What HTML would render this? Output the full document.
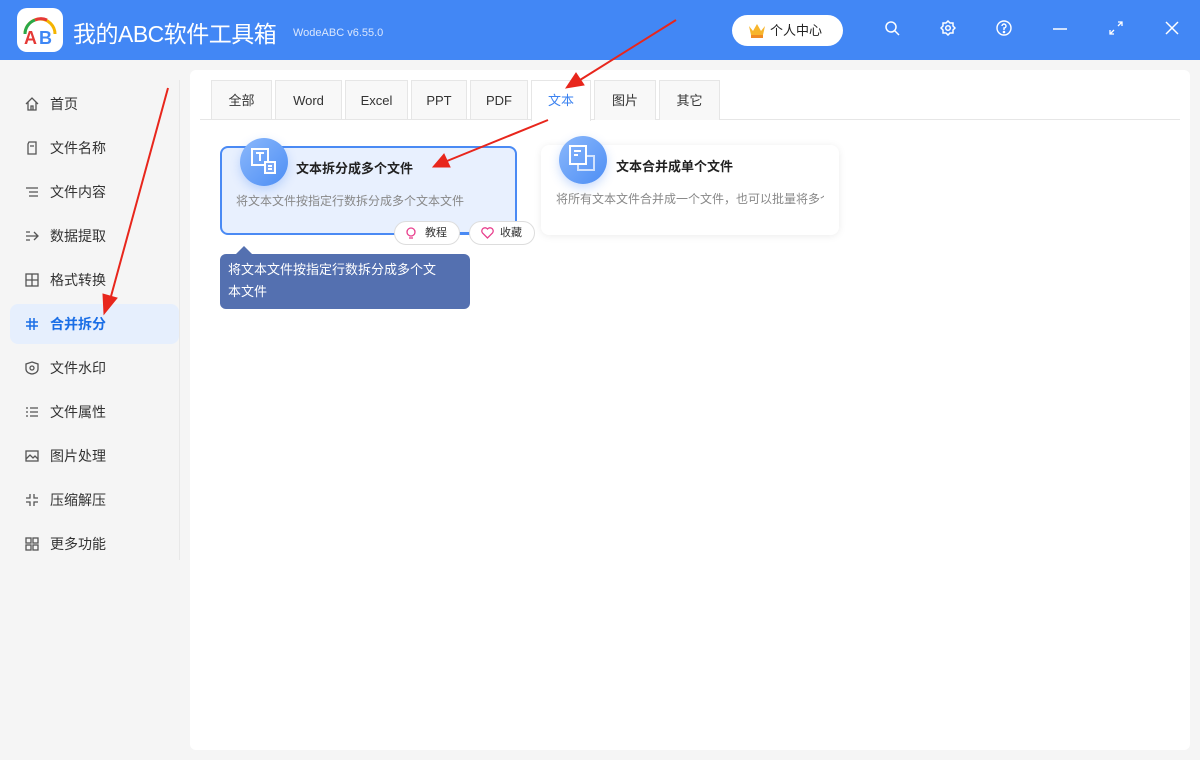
<!DOCTYPE html>
<html><head><meta charset="utf-8"><style>
*{margin:0;padding:0;box-sizing:border-box}
body{width:1200px;height:760px;background:#f5f5f5;font-family:"Liberation Sans","Noto Sans CJK SC",sans-serif;position:relative;overflow:hidden;color:#333}
.hdr{position:absolute;left:0;top:0;width:1200px;height:60px;background:#4287f5}
.logo{position:absolute;left:17px;top:8px;width:46px;height:44px;background:#fff;border-radius:10px}
.title{position:absolute;left:73px;top:15px;color:#fff;font-size:23px;letter-spacing:-0.5px;white-space:nowrap}
.ver{position:absolute;left:293px;top:27px;color:#dbe7fd;font-size:11px}
.user{position:absolute;left:732px;top:15px;width:111px;height:31px;background:#fff;border-radius:16px;font-size:13px;line-height:31px;padding-left:38px;color:#222}
.ic{position:absolute;top:20px}
.side{position:absolute;left:0;top:60px;width:180px;height:700px}
.it{position:absolute;left:10px;width:169px;height:40px;line-height:40px;font-size:14px;padding-left:40px;color:#333;border-radius:8px}
.it svg{position:absolute;left:15px;top:13px}
.it.a{background:#e6effd;color:#1a6ee6;font-weight:bold}
.vl{position:absolute;left:179px;top:80px;width:1px;height:480px;background:#e8e8e8}
.panel{position:absolute;left:190px;top:70px;width:1000px;height:680px;background:#fff;border-radius:6px}
.tab{position:absolute;top:80px;height:40px;background:#f8f8f8;border:1px solid #e6e6e6;border-bottom:none;font-size:13px;text-align:center;line-height:40px;color:#333}
.tab.a{background:#fff;color:#3b82f0;height:41px}
.tline{position:absolute;left:200px;top:119px;width:980px;height:1px;background:#e6e6e6}
.card{position:absolute;border-radius:8px}
.circ{position:absolute;width:48px;height:48px;border-radius:50%;background:linear-gradient(135deg,#8bb8fb,#4d8ef5);box-shadow:0 4px 10px rgba(80,140,245,.3)}
.ct{position:absolute;font-size:13px;font-weight:bold;color:#222}
.cd{position:absolute;font-size:12px;color:#888;white-space:nowrap;overflow:hidden}
.btn{position:absolute;top:221px;height:24px;width:66px;background:#fff;border:1px solid #ddd;border-radius:12px;font-size:11px;line-height:22px;padding-left:30px;color:#333}
.btn svg{position:absolute;left:11px;top:5px}
.tip{position:absolute;left:220px;top:254px;width:250px;height:55px;background:#5470b0;border-radius:6px;color:#fff;font-size:13px;line-height:22px;padding:5px 22px 6px 8px}
</style></head><body>
<div class="hdr">
 <div class="logo"><svg width="46" height="44" viewBox="0 0 46 44"><path d="M8 26 A15 15 0 0 1 38 26" fill="none" stroke="#f5b400" stroke-width="3"/><path d="M8 26 A15 15 0 0 1 18 12" fill="none" stroke="#2aa84a" stroke-width="3"/><path d="M18 12 A15 15 0 0 1 30 12" fill="none" stroke="#e53935" stroke-width="3"/><text x="7" y="36" font-size="18" font-weight="bold" fill="#e53935" font-family="Liberation Sans">A</text><text x="22" y="36" font-size="18" font-weight="bold" fill="#3f87f5" font-family="Liberation Sans">B</text></svg></div>
 <div class="title">我的ABC软件工具箱</div>
 <div class="ver">WodeABC v6.55.0</div>
 <div class="user"><svg style="position:absolute;left:16px;top:8px" width="18" height="15" viewBox="0 0 18 15"><path d="M1 3 L5 8 L9 1 L13 8 L17 3 L15 12 H3Z" fill="#f7b52c"/><rect x="3" y="12" width="12" height="3" fill="#f08a24"/></svg>个人中心</div>
 <svg class="ic" style="left:884px" width="16" height="16" viewBox="0 0 16 16" fill="none" stroke="#fff" stroke-width="1.5"><circle cx="7" cy="7" r="5"/><path d="M11 11 L15 15"/></svg>
 <svg class="ic" style="left:940px" width="16" height="16" viewBox="0 0 16 16" fill="none" stroke="#fff" stroke-width="1.5"><path d="M8 1 L10 3 L13 3 L13 6 L15 8 L13 10 L13 13 L10 13 L8 15 L6 13 L3 13 L3 10 L1 8 L3 6 L3 3 L6 3Z"/><circle cx="8" cy="8" r="2.3"/></svg>
 <svg class="ic" style="left:996px" width="16" height="16" viewBox="0 0 16 16" fill="none" stroke="#fff" stroke-width="1.4"><circle cx="8" cy="8" r="7"/><path d="M6 6 A2 2 0 1 1 8 8 V10"/><circle cx="8" cy="12" r=".6" fill="#fff"/></svg>
 <svg class="ic" style="left:1052px" width="16" height="16"><path d="M1 9 H15" stroke="#fff" stroke-width="1.5"/></svg>
 <svg class="ic" style="left:1108px" width="16" height="16" fill="none" stroke="#fff" stroke-width="1.3"><path d="M10 2 H14 V6 M14 2 L10 6 M2 10 V14 H6 M2 14 L6 10"/></svg>
 <svg class="ic" style="left:1164px" width="16" height="16" stroke="#fff" stroke-width="1.5"><path d="M2 2 L14 14 M14 2 L2 14"/></svg>
</div>
<div class="side">
 <div class="it" style="top:24px"><svg width="14" height="14" fill="none" stroke="#555" stroke-width="1.3"><path d="M1 7 L7 1 L13 7 M3 5 V13 H11 V5 M6 13 V9 H8 V13"/></svg>首页</div>
 <div class="it" style="top:68px"><svg width="14" height="14" fill="none" stroke="#555" stroke-width="1.3"><path d="M4 1 H11 V13 H3 V3Z M5 5 H9"/></svg>文件名称</div>
 <div class="it" style="top:112px"><svg width="14" height="14" stroke="#555" stroke-width="1.3"><path d="M1 3 H13 M4 7 H13 M4 11 H13"/></svg>文件内容</div>
 <div class="it" style="top:156px"><svg width="14" height="14" fill="none" stroke="#555" stroke-width="1.3"><path d="M1 7 H13 M9 3 L13 7 L9 11 M1 3 H5 M1 11 H5"/></svg>数据提取</div>
 <div class="it" style="top:200px"><svg width="14" height="14" fill="none" stroke="#555" stroke-width="1.3"><rect x="1" y="1" width="12" height="12"/><path d="M7 1 V13 M1 7 H13"/></svg>格式转换</div>
 <div class="it a" style="top:244px"><svg width="14" height="14" stroke="#1a6ee6" stroke-width="1.5"><path d="M5 1 V13 M9 1 V13 M1 5 H13 M1 9 H13"/></svg>合并拆分</div>
 <div class="it" style="top:288px"><svg width="14" height="14" fill="none" stroke="#555" stroke-width="1.3"><path d="M7 1 L13 3 V8 Q13 12 7 13 Q1 12 1 8 V3Z"/><circle cx="7" cy="7" r="2"/></svg>文件水印</div>
 <div class="it" style="top:332px"><svg width="14" height="14" stroke="#555" stroke-width="1.3"><path d="M1 3 H3 M5 3 H13 M1 7 H3 M5 7 H13 M1 11 H3 M5 11 H13"/></svg>文件属性</div>
 <div class="it" style="top:376px"><svg width="14" height="14" fill="none" stroke="#555" stroke-width="1.3"><rect x="1" y="2" width="12" height="10"/><path d="M1 10 L5 6 L8 9 L10 7 L13 10"/></svg>图片处理</div>
 <div class="it" style="top:420px"><svg width="14" height="14" fill="none" stroke="#555" stroke-width="1.3"><path d="M5 1 V5 H1 M9 1 V5 H13 M5 13 V9 H1 M9 13 V9 H13"/></svg>压缩解压</div>
 <div class="it" style="top:464px"><svg width="14" height="14" fill="none" stroke="#555" stroke-width="1.3"><rect x="1" y="1" width="5" height="5"/><rect x="8" y="1" width="5" height="5"/><rect x="1" y="8" width="5" height="5"/><rect x="8" y="8" width="5" height="5"/></svg>更多功能</div>
</div>
<div class="vl"></div>
<div class="panel"></div>
<div class="tab" style="left:211px;width:61px">全部</div>
<div class="tab" style="left:275px;width:67px">Word</div>
<div class="tab" style="left:345px;width:63px">Excel</div>
<div class="tab" style="left:411px;width:56px">PPT</div>
<div class="tab" style="left:470px;width:58px">PDF</div>
<div class="tline"></div>
<div class="tab a" style="left:531px;width:60px">文本</div>
<div class="tab" style="left:594px;width:62px">图片</div>
<div class="tab" style="left:659px;width:61px">其它</div>

<div class="card" style="left:220px;top:146px;width:297px;height:89px;background:#e8f0fe;border:2px solid #4a8af4"></div>
<div class="circ" style="left:240px;top:138px"><svg width="48" height="48" fill="none" stroke="#fff" stroke-width="2"><rect x="12" y="11" width="16" height="16"/><path d="M16 15 H24 M20 15 V23"/><rect x="25" y="24" width="10" height="11" fill="#7aa8f6"/><path d="M28 28 H32 M28 31 H32"/></svg></div>
<div class="ct" style="left:296px;top:158px">文本拆分成多个文件</div>
<div class="cd" style="left:236px;top:192px">将文本文件按指定行数拆分成多个文本文件</div>
<div style="position:absolute;left:459px;top:232px;width:12px;height:2px;background:#4a8af4"></div>
<div class="btn" style="left:394px"><svg width="10" height="13" fill="none" stroke="#e83e8c" stroke-width="1.3"><circle cx="5" cy="5" r="4"/><path d="M3 11 H7"/></svg>教程</div>
<div class="btn" style="left:469px"><svg width="13" height="12" fill="none" stroke="#e83e8c" stroke-width="1.3"><path d="M6.5 11 L1.5 6 A3 3 0 0 1 6.5 2 A3 3 0 0 1 11.5 6Z"/></svg>收藏</div>
<div style="position:absolute;left:236px;top:246px;width:0;height:0;border-left:8px solid transparent;border-right:8px solid transparent;border-bottom:8px solid #5470b0"></div>
<div class="tip">将文本文件按指定行数拆分成多个文本文件</div>

<div class="card" style="left:541px;top:145px;width:298px;height:90px;background:#fff;box-shadow:0 1px 8px rgba(0,0,0,.08)"></div>
<div class="circ" style="left:559px;top:136px"><svg width="48" height="48" fill="none" stroke="#fff" stroke-width="2"><rect x="11" y="10" width="16" height="18"/><path d="M15 15 H22 M15 19 H19"/><path d="M27 20 H35 V34 H19 V28" stroke-opacity=".7"/></svg></div>
<div class="ct" style="left:616px;top:156px">文本合并成单个文件</div>
<div class="cd" style="left:556px;top:190px;width:268px">将所有文本文件合并成一个文件，也可以批量将多个</div>

<svg style="position:absolute;left:0;top:0" width="1200" height="760">
<g fill="#e8261c" stroke="#e8261c">
<line x1="168" y1="88" x2="110" y2="300" stroke-width="2"/>
<path d="M104 314 L103 294 L117 298Z"/>
<line x1="676" y1="20" x2="580" y2="80" stroke-width="2"/>
<path d="M566 88 L576 73 L584 85Z"/>
<line x1="548" y1="120" x2="447" y2="161" stroke-width="2"/>
<path d="M433 167 L444 154 L450 167Z"/>
</g></svg>
</body></html>
